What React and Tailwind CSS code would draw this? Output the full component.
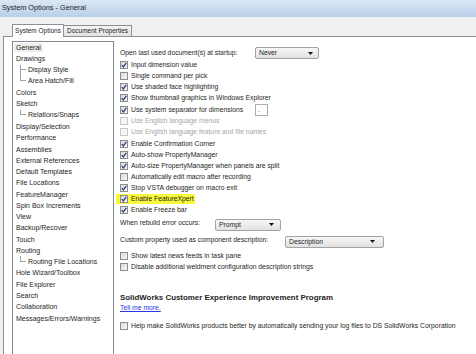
import React from "react";

function Box({ checked, disabled }) {
  return (
    <span
      className={`w-[8px] h-[8px] shrink-0 border flex items-center justify-center ${
        disabled
          ? "border-[#c8c8c8] bg-[#f5f5f5]"
          : "border-[#8d8d8d] bg-gradient-to-br from-[#d8d8d8] to-[#fbfbfb]"
      }`}
    >
      {checked && (
        <svg width="6" height="6" viewBox="0 0 6 6" className="overflow-visible">
          <path d="M0.8 3.1 L2.4 4.9 L5.3 0.8" stroke="#2b4180" strokeWidth="1.3" fill="none" />
        </svg>
      )}
    </span>
  );
}

function Arrow() {
  return (
    <svg width="5" height="3" viewBox="0 0 5 3">
      <path d="M0 0H5L2.5 3Z" fill="#111" />
    </svg>
  );
}

function Check({ label, checked, disabled, tall, children }) {
  return (
    <div className={`flex items-center ${tall ? "h-[12.15px]" : "h-[11.15px]"}`}>
      <Box checked={checked} disabled={disabled} />
      <span className={`ml-[3px] leading-[8px] whitespace-nowrap ${disabled ? "text-[#a6a6a6]" : ""}`}>
        {label}
      </span>
      {children}
    </div>
  );
}

const tree = [
  { t: "General", sel: true },
  { t: "Drawings" },
  { t: "Display Style", child: true },
  { t: "Area Hatch/Fill", child: true, last: true },
  { t: "Colors" },
  { t: "Sketch" },
  { t: "Relations/Snaps", child: true, last: true },
  { t: "Display/Selection" },
  { t: "Performance" },
  { t: "Assemblies" },
  { t: "External References" },
  { t: "Default Templates" },
  { t: "File Locations" },
  { t: "FeatureManager" },
  { t: "Spin Box Increments" },
  { t: "View" },
  { t: "Backup/Recover" },
  { t: "Touch" },
  { t: "Routing" },
  { t: "Routing File Locations", child: true, last: true },
  { t: "Hole Wizard/Toolbox" },
  { t: "File Explorer" },
  { t: "Search" },
  { t: "Collaboration" },
  { t: "Messages/Errors/Warnings" },
];

export default function App() {
  return (
    <div className="w-[476px] h-[354px] overflow-hidden bg-[#f0f0f0] flex flex-col font-['Liberation_Sans',Arial,sans-serif] text-[#1e1e1e]">
      <div className="h-[17px] shrink-0 bg-gradient-to-b from-[#dbe7f4] to-[#b7cfe9] flex items-center pl-[2px] text-[7.3px]">
        System Options - General
      </div>
      <div className="h-[19px] shrink-0 flex items-end pl-[12px] text-[6.5px]">
        <div className="relative z-10 h-[13px] -mb-px w-[52px] border border-b-0 border-[#8e9096] bg-white flex items-center justify-center rounded-t-[1px]">
          System Options
        </div>
        <div className="h-[11px] w-[68px] border border-l-0 border-b-0 border-[#8e9096] bg-gradient-to-b from-[#f4f4f4] to-[#e3e3e3] flex items-center justify-center">
          Document Properties
        </div>
      </div>
      <div className="flex-1 ml-[3px] border-l border-t border-[#8e9096] bg-white flex items-start">
        <div className="ml-[8px] mt-[4px] w-[102px] h-[330px] shrink-0 border border-[#828790] pt-0 text-[7px]">
          {tree.map((it) => (
            <div key={it.t} className="h-[11.27px] flex items-stretch whitespace-nowrap">
              {it.child ? (
                <div className="flex items-stretch pl-[7px]">
                  <div className="w-[6px] flex flex-col">
                    <div className="h-1/2 border-l border-b border-[#a3a3a3]" />
                    <div className={`h-1/2 ${it.last ? "" : "border-l border-[#a3a3a3]"}`} />
                  </div>
                  <span className="ml-[2px] self-center leading-[8px]">{it.t}</span>
                </div>
              ) : (
                <span
                  className={`ml-[1px] px-[2px] self-center leading-[9px] ${it.sel ? "bg-[#ededed]" : ""}`}
                >
                  {it.t}
                </span>
              )}
            </div>
          ))}
        </div>
        <div className="ml-[6px] mt-[10px] flex flex-col text-[6.8px]">
          <div className="h-[12px] flex items-center">
            <span className="w-[135px] leading-[8px]">Open last used document(s) at startup:</span>
            <div className="w-[64px] h-[12px] border border-[#a2a2a2] rounded-[2px] bg-gradient-to-b from-[#f7f7f7] to-[#e2e2e2] flex items-center justify-between pl-[3px] pr-[5px]">
              <span>Never</span>
              <Arrow />
            </div>
          </div>
          <Check label="Input dimension value" checked />
          <Check label="Single command per pick" />
          <Check label="Use shaded face highlighting" checked />
          <Check label="Show thumbnail graphics in Windows Explorer" checked />
          <Check label="Use system separator for dimensions" checked tall>
            <div className="ml-[12px] w-[13px] h-[12px] border border-[#abadb3] bg-white flex items-end pl-[2px] pb-[2px] leading-[6px]">
              .
            </div>
          </Check>
          <Check label="Use English language menus" disabled />
          <Check label="Use English language feature and file names" disabled />
          <Check label="Enable Confirmation Corner" checked />
          <Check label="Auto-show PropertyManager" checked />
          <Check label="Auto-size PropertyManager when panels are split" checked />
          <Check label="Automatically edit macro after recording" />
          <Check label="Stop VSTA debugger on macro exit" checked />
          <div className="h-[11.15px] flex items-center">
            <div className="-ml-[4px] pl-[4px] w-[79px] h-[10px] bg-[#f9f93c] flex items-center">
              <Box checked />
              <span className="ml-[3px] leading-[8px] whitespace-nowrap">Enable FeatureXpert</span>
            </div>
          </div>
          <Check label="Enable Freeze bar" checked />
          <div className="mt-[3px] h-[12px] flex items-start">
            <span className="w-[95px] leading-[8px]">When rebuild error occurs:</span>
            <div className="w-[66px] h-[12px] border border-[#a2a2a2] rounded-[2px] bg-gradient-to-b from-[#f7f7f7] to-[#e2e2e2] flex items-center justify-between pl-[3px] pr-[6px]">
              <span>Prompt</span>
              <Arrow />
            </div>
          </div>
          <div className="mt-[5px] h-[12px] flex items-start">
            <span className="w-[165px] leading-[8px] whitespace-nowrap">Custom property used as component description:</span>
            <div className="w-[99px] h-[12px] border border-[#a2a2a2] rounded-[2px] bg-gradient-to-b from-[#f7f7f7] to-[#e2e2e2] flex items-center justify-between pl-[3px] pr-[8px]">
              <span>Description</span>
              <Arrow />
            </div>
          </div>
          <div className="mt-[2px]">
            <Check label="Show latest news feeds in task pane" />
            <Check label="Disable additional weldment configuration description strings" />
          </div>
          <div className="mt-[21px] h-[10px] flex items-center font-bold text-[7.9px] whitespace-nowrap">
            SolidWorks Customer Experience Improvement Program
          </div>
          <div className="h-[10px] flex items-center">
            <span className="text-[#2b35e8] underline leading-[8px]">Tell me more.</span>
          </div>
          <div className="mt-[7px]">
            <Check label="Help make SolidWorks products better by automatically sending your log files to DS SolidWorks Corporation" />
          </div>
        </div>
      </div>
    </div>
  );
}
